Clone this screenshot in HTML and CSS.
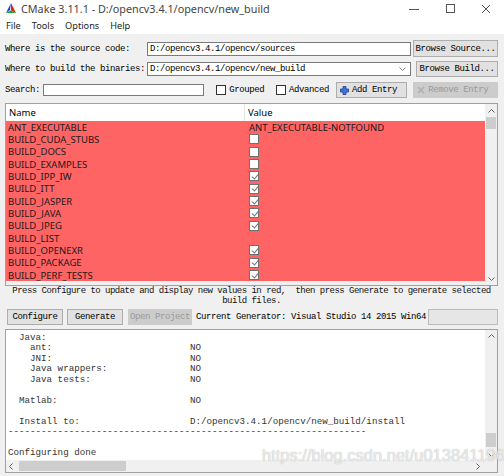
FILE: index.html
```html
<!DOCTYPE html>
<html>
<head>
<meta charset="utf-8">
<title>CMake</title>
<link rel="stylesheet" href="styles.css">
</head>
<body>
<div class="titlebar">
  <svg class="logo" viewBox="0 0 10 11"><polygon points="5,0 0,10 4,7" fill="#1f3fd0"/><polygon points="5,0 10,10 5,7.5" fill="#e0231b"/><polygon points="0,10 10,10 4.6,7.4" fill="#1aa32a"/></svg>
  <span class="title">CMake 3.11.1 - D:/opencv3.4.1/opencv/new_build</span>
  <div class="winctl">
    <span class="wbtn"><svg width="10" height="10" viewBox="0 0 10 10"><line x1="0" y1="5.5" x2="10" y2="5.5" stroke="#555" stroke-width="1"/></svg></span>
    <span class="wbtn"><svg width="10" height="10" viewBox="0 0 10 10"><rect x="1.5" y="0.5" width="8" height="8" fill="none" stroke="#555" stroke-width="1"/></svg></span>
    <span class="wbtn"><svg width="10" height="10" viewBox="0 0 10 10"><path d="M1 1 L9 9 M9 1 L1 9" stroke="#555" stroke-width="1"/></svg></span>
  </div>
</div>
<div class="menubar"><span>File</span><span>Tools</span><span>Options</span><span>Help</span></div>
<div class="content">
  <div class="row r1">
    <span class="lbl mono">Where is the source code:</span>
    <div class="field mono">D:/opencv3.4.1/opencv/sources</div>
    <button class="btn mono bsrc">Browse Source...</button>
  </div>
  <div class="row r2">
    <span class="lbl mono">Where to build the binaries:</span>
    <div class="field combo mono">D:/opencv3.4.1/opencv/new_build<svg class="dd" width="7" height="4" viewBox="0 0 7 4"><polyline points="0.5,0.5 3.5,3.5 6.5,0.5" fill="none" stroke="#777" stroke-width="0.9"/></svg></div>
    <button class="btn mono bbld">Browse Build...</button>
  </div>
  <div class="row r3">
    <span class="lbl2 mono">Search:</span>
    <div class="sfield"></div>
    <span class="cb"></span><span class="mono cbl">Grouped</span>
    <span class="cb"></span><span class="mono cbl">Advanced</span>
    <button class="btn mono badd"><svg class="plus" width="9" height="9" viewBox="0 0 9 9"><path d="M3 0.5 H6 V3 H8.5 V6 H6 V8.5 H3 V6 H0.5 V3 H3 Z" fill="#3d74e0" stroke="#1d3f9a" stroke-width="0.8"/></svg>Add Entry</button>
    <button class="btn mono dis brem"><svg class="xic" width="8" height="8" viewBox="0 0 8 8"><path d="M1 1 L7 7 M7 1 L1 7" stroke="#b0b0b0" stroke-width="1.6"/></svg>Remove Entry</button>
  </div>
  <div class="table">
    <div class="tmain">
      <div class="thead"><div class="c1">Name</div><div class="c2">Value</div></div>
      <div class="tbody">
        <div class="tr"><div class="c1">ANT_EXECUTABLE</div><div class="c2">ANT_EXECUTABLE-NOTFOUND</div></div>
        <div class="tr"><div class="c1">BUILD_CUDA_STUBS</div><div class="c2"><span class="chk"></span></div></div>
        <div class="tr"><div class="c1">BUILD_DOCS</div><div class="c2"><span class="chk"></span></div></div>
        <div class="tr"><div class="c1">BUILD_EXAMPLES</div><div class="c2"><span class="chk"></span></div></div>
        <div class="tr"><div class="c1">BUILD_IPP_IW</div><div class="c2"><span class="chk on"></span></div></div>
        <div class="tr"><div class="c1">BUILD_ITT</div><div class="c2"><span class="chk on"></span></div></div>
        <div class="tr"><div class="c1">BUILD_JASPER</div><div class="c2"><span class="chk on"></span></div></div>
        <div class="tr"><div class="c1">BUILD_JAVA</div><div class="c2"><span class="chk on"></span></div></div>
        <div class="tr"><div class="c1">BUILD_JPEG</div><div class="c2"><span class="chk on"></span></div></div>
        <div class="tr"><div class="c1">BUILD_LIST</div><div class="c2"></div></div>
        <div class="tr"><div class="c1">BUILD_OPENEXR</div><div class="c2"><span class="chk on"></span></div></div>
        <div class="tr"><div class="c1">BUILD_PACKAGE</div><div class="c2"><span class="chk on"></span></div></div>
        <div class="tr"><div class="c1">BUILD_PERF_TESTS</div><div class="c2"><span class="chk on"></span></div></div>
      </div>
    </div>
    <div class="vscroll">
      <svg class="arr" width="7" height="4" viewBox="0 0 7 4"><polyline points="0.5,3.5 3.5,0.5 6.5,3.5" fill="none" stroke="#606060" stroke-width="1"/></svg>
      <div class="thumb t1"></div>
      <div class="spacer"></div>
      <svg class="arr" width="7" height="4" viewBox="0 0 7 4"><polyline points="0.5,0.5 3.5,3.5 6.5,0.5" fill="none" stroke="#606060" stroke-width="1"/></svg>
    </div>
  </div>
  <p class="status mono">Press Configure to update and display new values in red,&nbsp; then press Generate to generate selected<br>build files.</p>
  <div class="brow">
    <button class="btn mono bcfg">Configure</button>
    <button class="btn mono bgen">Generate</button>
    <button class="btn mono dis bopen">Open Project</button>
    <span class="mono gen">Current Generator: Visual Studio 14 2015 Win64</span>
    <div class="progress"></div>
  </div>
  <div class="output">
<pre class="log">  Java:
    ant:                         NO
    JNI:                         NO
    Java wrappers:               NO
    Java tests:                  NO

  Matlab:                        NO

  Install to:                    D:/opencv3.4.1/opencv/new_build/install
-----------------------------------------------------------------

Configuring done</pre>
    <div class="vscroll ovs">
      <svg class="arr" width="7" height="4" viewBox="0 0 7 4"><polyline points="0.5,3.5 3.5,0.5 6.5,3.5" fill="none" stroke="#606060" stroke-width="1"/></svg>
      <div class="spacer"></div>
      <div class="thumb t2"></div>
      <svg class="arr" width="7" height="4" viewBox="0 0 7 4"><polyline points="0.5,0.5 3.5,3.5 6.5,0.5" fill="none" stroke="#606060" stroke-width="1"/></svg>
    </div>
    <div class="hscroll">
      <svg class="harr" width="4" height="7" viewBox="0 0 4 7"><polyline points="3.5,0.5 0.5,3.5 3.5,6.5" fill="none" stroke="#606060" stroke-width="1"/></svg>
      <div class="hthumb"></div>
      <svg class="harr hr" width="4" height="7" viewBox="0 0 4 7"><polyline points="0.5,0.5 3.5,3.5 0.5,6.5" fill="none" stroke="#606060" stroke-width="1"/></svg>
    </div>
    <div class="corner"></div>
  </div>
</div>
<div class="watermark">https://blog.csdn.net/u013841196</div>
</body>
</html>
```
FILE: styles.css
```css
* { box-sizing: border-box; margin: 0; padding: 0; }
html, body { width: 504px; height: 476px; overflow: hidden; }
body {
  background: #f0f0f0;
  font-family: "Noto Sans", "Open Sans", sans-serif;
  color: #000;
  position: relative;
}
.mono {
  font-family: "Liberation Mono", monospace;
  font-size: 9px;
  letter-spacing: -0.4px;
}
.titlebar {
  height: 17px;
  background: #fff;
  display: flex;
  align-items: center;
  padding-left: 6px;
}
.logo { width: 10px; height: 11px; margin-right: 5px; }
.title { font-size: 10.8px; color: #444; }
.winctl { margin-left: auto; display: flex; margin-right: 0; }
.wbtn { width: 36px; height: 17px; display: flex; align-items: center; justify-content: center; }
.menubar {
  height: 17px;
  background: #fff;
  display: flex;
  align-items: center;
  gap: 11px;
  padding-left: 6px;
  font-size: 9.2px;
  color: #222;
}
.content { padding: 6px 6px 0 5px; }
.row { display: flex; align-items: center; }
.r1 { height: 17px; }
.r2 { height: 16px; margin-top: 4px; }
.r3 { height: 16px; margin-top: 5px; }
.lbl { width: 142px; }
.field {
  width: 264px;
  height: 14px;
  background: #fff;
  border: 1px solid #7a7a7a;
  padding-left: 2px;
  line-height: 12px;
  position: relative;
}
.combo .dd { position: absolute; right: 4px; top: 4px; }
.btn {
  height: 16px;
  background: #e1e1e1;
  border: 1px solid #adadad;
  color: #000;
  display: flex;
  align-items: center;
  justify-content: center;
}
.bsrc { width: 85px; margin-left: auto; height: 17px; }
.bbld { width: 82px; margin-left: auto; }
.lbl2 { width: 39px; }
.sfield { width: 163px; height: 12px; background: #fff; border: 1px solid #7a7a7a; }
.cb { width: 10px; height: 10px; background: #fff; border: 1px solid #333; margin-left: 12px; }
.cb + .cbl { margin-left: 3px; }
.badd { width: 72px; margin-left: 7px; justify-content: flex-start; padding-left: 3px; gap: 3px; }
.brem { width: 86px; margin-left: 6px; justify-content: flex-start; padding-left: 3px; gap: 3px; }
.dis { background: #cccccc; border-color: #cccccc; color: #9a9a9a; }

.table {
  margin-top: 5px;
  height: 183px;
  border: 1px solid #a0a0a0;
  display: flex;
  background: #f0f0f0;
}
.tmain { flex: 1; overflow: hidden; display: flex; flex-direction: column; }
.thead { height: 17px; background: #fff; display: flex; font-size: 9.5px; align-items: center; }
.thead .c1 { width: 239px; padding-left: 3px; border-right: 1px solid #e5e5e5; height: 17px; line-height: 17px; }
.thead .c2 { padding-left: 3px; }
.tbody { height: 160px; overflow: hidden; background: #ff6464; }
.tr { height: 12.33px; display: flex; align-items: center; font-size: 9.5px; color: #1a1a1a; }
.tr .c1 { width: 240px; padding-left: 2px; }
.tr .c2 { padding-left: 3px; display: flex; align-items: center; }
.chk {
  width: 10px;
  height: 10px;
  background: #fff;
  border: 1px solid #707070;
  position: relative;
}
.chk.on::after {
  content: "";
  position: absolute;
  left: 2.5px;
  top: 0.5px;
  width: 3px;
  height: 5px;
  border-right: 1px solid #707070;
  border-bottom: 1px solid #707070;
  transform: rotate(40deg);
}
.vscroll {
  width: 12px;
  background: #f0f0f0;
  display: flex;
  flex-direction: column;
  align-items: center;
  padding: 5px 0 4px;
}
.spacer { flex: 1; }
.thumb { width: 10px; background: #cdcdcd; }
.t1 { height: 12px; margin-top: 4px; }
.status { text-align: center; line-height: 10px; margin-top: 0; color: #111; letter-spacing: -0.52px; }
.brow { display: flex; align-items: center; height: 16px; margin-top: 3px; }
.bcfg { width: 56px; margin-left: 2px; }
.bgen { width: 56px; margin-left: 4px; }
.bopen { width: 64px; margin-left: 5px; }
.gen { margin-left: 4px; }
.progress { margin-left: auto; width: 70px; height: 16px; background: #e6e6e6; border: 1px solid #bcbcbc; }
.output {
  margin-top: 4px;
  height: 144px;
  background: #fff;
  border: 1px solid #a0a0a0;
  display: grid;
  grid-template-columns: 1fr 12px;
  grid-template-rows: 1fr 12px;
}
.log {
  font-family: "Liberation Mono", monospace;
  font-size: 9.2px;
  line-height: 10.45px;
  color: #333;
  padding: 3px 0 0 2px;
  overflow: hidden;
}
.ovs { padding: 4px 0 3px; }
.t2 { height: 14px; margin-bottom: 6px; }
.hscroll {
  background: #f0f0f0;
  display: flex;
  align-items: center;
  padding-left: 3px;
}
.hthumb { width: 107px; height: 10px; background: #cdcdcd; margin-left: 6px; }
.hr { margin-left: auto; margin-right: 5px; }
.corner { background: #f0f0f0; }
.watermark {
  position: absolute;
  left: 262px;
  top: 446px;
  font-family: "Liberation Sans", Arial, sans-serif;
  font-size: 16.5px;
  color: rgba(255, 255, 255, 0.75);
  text-shadow: 0 0 1px rgba(120, 120, 120, 0.7);
  letter-spacing: 0;
}
```
